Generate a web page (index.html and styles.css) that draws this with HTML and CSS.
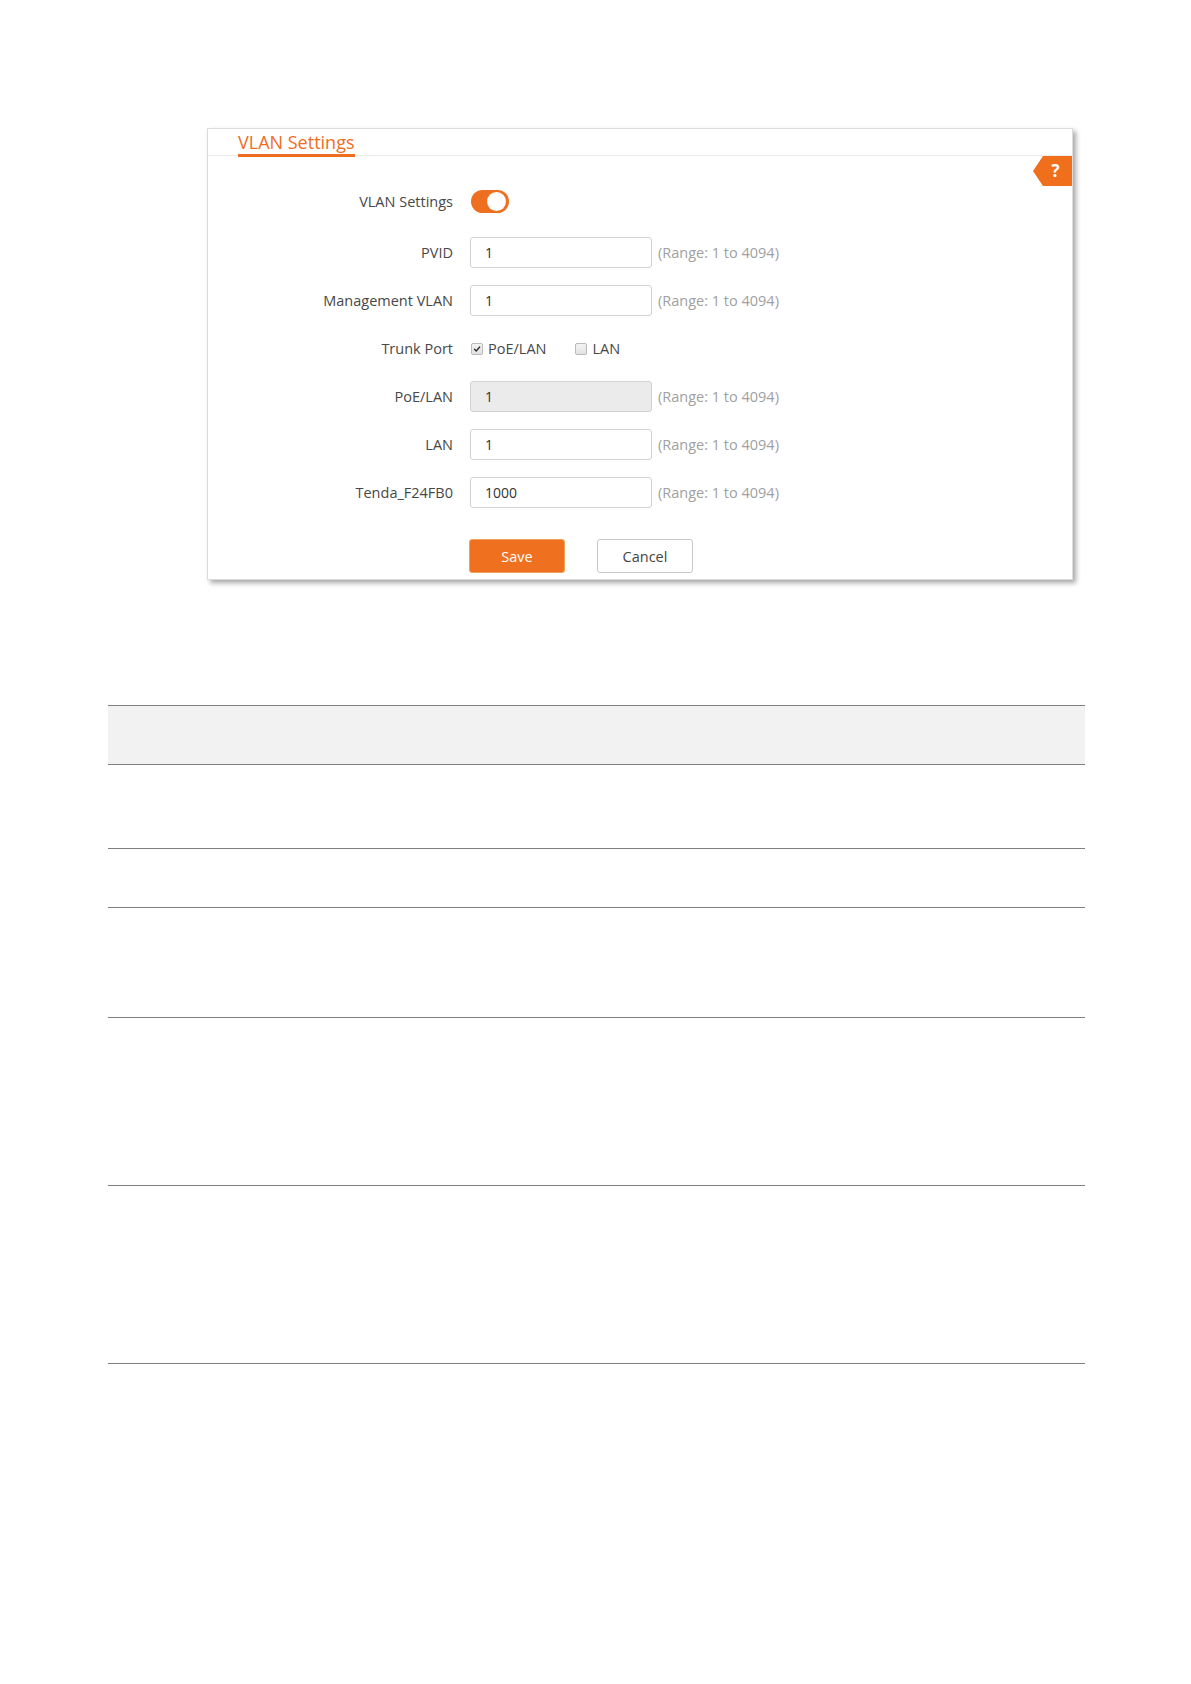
FILE: index.html
```html
<!DOCTYPE html>
<html lang="en">
<head>
<meta charset="utf-8">
<title>VLAN Settings</title>
<link rel="stylesheet" href="styles.css">
</head>
<body>
<div class="page">
  <div class="card">
    <div class="card-head">
      <span class="card-title">VLAN Settings</span>
    </div>
    <div class="help-badge">?</div>
    <div class="form">
      <div class="row row-toggle">
        <div class="label">VLAN Settings</div>
        <div class="control">
          <span class="toggle"><span class="knob"></span></span>
        </div>
      </div>
      <div class="row">
        <div class="label">PVID</div>
        <div class="control">
          <span class="input">1</span>
          <span class="hint">(Range: 1 to 4094)</span>
        </div>
      </div>
      <div class="row">
        <div class="label">Management VLAN</div>
        <div class="control">
          <span class="input">1</span>
          <span class="hint">(Range: 1 to 4094)</span>
        </div>
      </div>
      <div class="row">
        <div class="label">Trunk Port</div>
        <div class="control">
          <span class="check checked"><svg viewBox="0 0 12 12" width="12" height="12"><path d="M3 6.2 L5.1 8.4 L9.2 3.6" fill="none" stroke="#333" stroke-width="1.7" stroke-linecap="round" stroke-linejoin="round"/></svg></span>
          <span class="check-label">PoE/LAN</span>
          <span class="check check-second"></span>
          <span class="check-label">LAN</span>
        </div>
      </div>
      <div class="row">
        <div class="label">PoE/LAN</div>
        <div class="control">
          <span class="input disabled">1</span>
          <span class="hint">(Range: 1 to 4094)</span>
        </div>
      </div>
      <div class="row">
        <div class="label">LAN</div>
        <div class="control">
          <span class="input">1</span>
          <span class="hint">(Range: 1 to 4094)</span>
        </div>
      </div>
      <div class="row">
        <div class="label">Tenda_F24FB0</div>
        <div class="control">
          <span class="input">1000</span>
          <span class="hint">(Range: 1 to 4094)</span>
        </div>
      </div>
      <div class="buttons">
        <span class="btn btn-save">Save</span>
        <span class="btn btn-cancel">Cancel</span>
      </div>
    </div>
  </div>

  <div class="table">
    <div class="tr th"></div>
    <div class="tr r1"></div>
    <div class="tr r2"></div>
    <div class="tr r3"></div>
    <div class="tr r4"></div>
    <div class="tr r5"></div>
  </div>
</div>
</body>
</html>
```
FILE: styles.css
```css
html, body {
  margin: 0;
  padding: 0;
  background: #ffffff;
}
body {
  font-family: "Open Sans", "Liberation Sans", sans-serif;
  color: #444;
}
.page {
  width: 1191px;
  padding-top: 128px;
  padding-bottom: 120px;
}

/* ---------- Card ---------- */
.card {
  position: relative;
  box-sizing: border-box;
  margin-left: 207px;
  width: 866px;
  height: 452px;
  background: #fff;
  border: 1px solid #dcdcdc;
  box-shadow: 3px 3px 5px rgba(0, 0, 0, 0.35);
}
.card-head {
  height: 26px;
  padding-left: 30px;
  border-bottom: 1px solid #ececec;
  display: flex;
  align-items: flex-end;
}
.card-title {
  display: inline-block;
  font-size: 18px;
  line-height: 24px;
  color: #ee6d1f;
  border-bottom: 3px solid #ee6d1f;
  margin-bottom: -2px;
  padding-right: 1px;
}
.help-badge {
  position: absolute;
  right: 0;
  top: 27px;
  width: 39px;
  height: 30px;
  background: #ef6f1d;
  color: #fff;
  font-weight: 700;
  font-size: 17px;
  line-height: 30px;
  text-align: center;
  text-indent: 6px;
  clip-path: polygon(10px 0, 100% 0, 100% 100%, 10px 100%, 0 50%);
}

/* ---------- Form ---------- */
.form {
  padding-top: 30px;
}
.row {
  display: flex;
  align-items: center;
  height: 31px;
  margin-bottom: 17px;
}
.row-toggle {
  margin-bottom: 20px;
}
.label {
  width: 245px;
  flex: none;
  text-align: right;
  font-size: 14.5px;
  color: #484848;
}
.control {
  display: flex;
  align-items: center;
  margin-left: 17px;
}
.toggle {
  position: relative;
  display: inline-block;
  width: 38px;
  height: 23px;
  border-radius: 12px;
  background: #ee6f1f;
  margin-left: 1px;
}
.knob {
  position: absolute;
  right: 3px;
  top: 2px;
  width: 19px;
  height: 19px;
  border-radius: 50%;
  background: #fff;
}
.input {
  box-sizing: border-box;
  display: inline-flex;
  align-items: center;
  width: 182px;
  height: 31px;
  padding-left: 14px;
  border: 1px solid #d2d2d2;
  border-radius: 3px;
  background: #fff;
  font-size: 14px;
  color: #333;
}
.input.disabled {
  background: #ebebeb;
}
.hint {
  margin-left: 6px;
  font-size: 14.5px;
  color: #a0a0a0;
}
.check {
  box-sizing: border-box;
  display: inline-flex;
  align-items: center;
  justify-content: center;
  width: 12px;
  height: 12px;
  border: 1px solid #b9b9b9;
  border-radius: 2px;
  background: linear-gradient(#f4f4f4, #e2e2e2);
  margin-left: 1px;
}
.check svg {
  display: block;
}
.check-second {
  margin-left: 29px;
}
.check-label {
  margin-left: 5px;
  font-size: 14.5px;
  color: #484848;
}
.buttons {
  display: flex;
  margin-left: 261px;
  margin-top: 31px;
  gap: 32px;
}
.btn {
  box-sizing: border-box;
  display: inline-flex;
  align-items: center;
  justify-content: center;
  width: 96px;
  height: 34px;
  border-radius: 3px;
  font-size: 14.5px;
}
.btn-save {
  background: #ef701f;
  border: 1px solid #f0a15c;
  color: #fff;
}
.btn-cancel {
  background: #fff;
  border: 1px solid #c8c8c8;
  color: #444;
}

/* ---------- Table ---------- */
.table {
  margin-top: 125px;
  margin-left: 108px;
  width: 977px;
  border-top: 1.5px solid #7f7f7f;
}
.tr {
  box-sizing: border-box;
  border-bottom: 1.5px solid #7f7f7f;
}
.th { height: 59px; background: #f2f2f2; }
.r1 { height: 84px; }
.r2 { height: 59px; }
.r3 { height: 110px; }
.r4 { height: 168px; }
.r5 { height: 178px; }
```
